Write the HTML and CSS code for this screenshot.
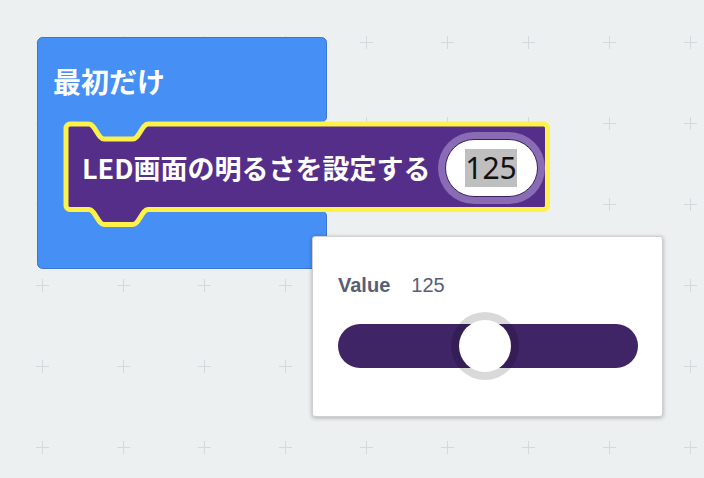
FILE: index.html
```html
<!DOCTYPE html>
<html lang="ja">
<head>
<meta charset="utf-8">
<title>LED brightness block</title>
<link rel="stylesheet" href="styles.css">
</head>
<body>
<div class="workspace">
  <svg class="grid" width="704" height="478" xmlns="http://www.w3.org/2000/svg">
    <defs>
      <pattern id="cross" width="81" height="81" patternUnits="userSpaceOnUse">
        <path d="M36 42.5 H49 M42.5 36 V49" stroke="#d5d9dc" stroke-width="1" fill="none"/>
      </pattern>
    </defs>
    <rect width="704" height="478" fill="url(#cross)"/>
  </svg>

  <div class="block-start">
    <svg class="shape" width="292" height="234" xmlns="http://www.w3.org/2000/svg">
      <path d="M5.5 0.5 H284.5 A5 5 0 0 1 289.5 5.5 V80 A5 5 0 0 1 284.5 85 H112 C106 85 103 102 97 102 H68 C62 102 59 85 53 85 H40 V174 H284.5 A5 5 0 0 1 289.5 179 V226.5 A5 5 0 0 1 284.5 231.5 H5.5 A5 5 0 0 1 0.5 226.5 V5.5 A5 5 0 0 1 5.5 0.5 Z" fill="#468ff5" stroke="#3a76d2" stroke-width="1"/>
    </svg>
    <div class="start-label">最初だけ</div>
  </div>

  <div class="block-led">
    <svg class="shape" width="492" height="110" xmlns="http://www.w3.org/2000/svg">
      <path d="M3 7 A4 4 0 0 1 7 3 H26 C32 3 35 18 41 18 H70 C76 18 79 3 85 3 H480.5 A4 4 0 0 1 484.5 7 V84.5 A4 4 0 0 1 480.5 88.5 H85 C79 88.5 76 103.5 70 103.5 H41 C35 103.5 32 88.5 26 88.5 H7 A4 4 0 0 1 3 84.5 Z" fill="#552e8a" stroke="#fef14a" stroke-width="5" stroke-linejoin="round"/>
    </svg>
    <div class="led-row">
      <span class="led-label">LED画面の明るさを設定する</span>
      <div class="ring">
        <div class="field"><span class="field-text">125</span></div>
      </div>
    </div>
  </div>

  <div class="dropdown">
    <div class="value-row">
      <span class="value-label">Value</span>
      <span class="value-num">125</span>
    </div>
    <div class="track">
      <div class="thumb" style="left:49.02%"></div>
    </div>
  </div>
</div>
</body>
</html>
```
FILE: styles.css
```css
html, body {
  margin: 0;
  padding: 0;
}
body {
  width: 704px;
  height: 478px;
  overflow: hidden;
  background: #ecf0f1;
  font-family: "Noto Sans CJK JP", "Noto Sans", sans-serif;
}
.workspace {
  position: relative;
  width: 704px;
  height: 478px;
}
.grid {
  position: absolute;
  left: 0;
  top: 0;
}
.shape {
  position: absolute;
  left: 0;
  top: 0;
}
.block-start {
  position: absolute;
  left: 37px;
  top: 37px;
  width: 292px;
  height: 234px;
}
.start-label {
  position: relative;
  padding: 30px 0 0 16px;
  color: #fff;
  font-weight: 700;
  font-size: 28px;
  line-height: 1;
}
.block-led {
  position: absolute;
  left: 63px;
  top: 121px;
  width: 492px;
  height: 110px;
}
.led-row {
  position: relative;
  display: flex;
  align-items: center;
  height: 93px;
  padding-left: 19px;
}
.led-label {
  color: #fff;
  font-weight: 700;
  font-size: 27px;
  line-height: 1;
  white-space: nowrap;
}
.ring {
  margin-left: 7px;
  margin-top: 1px;
  width: 107px;
  height: 72px;
  box-sizing: border-box;
  padding: 7px;
  border-radius: 36px;
  background: #8a6cb5;
}
.field {
  box-sizing: border-box;
  width: 93px;
  height: 58px;
  border-radius: 29px;
  background: #fff;
  border: 1px solid #3a2163;
  display: flex;
  align-items: center;
  justify-content: center;
}
.field-text {
  display: inline-block;
  height: 38px;
  line-height: 38px;
  background: #bfbfbf;
  color: #111;
  font-family: "Noto Sans", sans-serif;
  font-size: 30px;
}
.dropdown {
  position: absolute;
  left: 312px;
  top: 236px;
  width: 351px;
  height: 181px;
  box-sizing: border-box;
  background: #fff;
  border: 1px solid #cfcfcf;
  border-radius: 3px;
  box-shadow: 0 1px 4px rgba(0, 0, 0, 0.28);
  padding: 38px 24px 0 25px;
  font-family: "Liberation Sans", Arial, sans-serif;
}
.value-row {
  display: flex;
  gap: 21px;
  height: 20px;
  line-height: 20px;
  font-size: 20px;
  color: #575e75;
}
.value-label {
  font-weight: 700;
}
.track {
  position: relative;
  margin-top: 29px;
  width: 300px;
  height: 44px;
  border-radius: 22px;
  background: #3f2466;
}
.thumb {
  position: absolute;
  top: 50%;
  width: 52px;
  height: 52px;
  border-radius: 50%;
  background: #fff;
  box-shadow: 0 0 0 8px rgba(0, 0, 0, 0.15);
  transform: translate(-50%, -50%);
}
```
